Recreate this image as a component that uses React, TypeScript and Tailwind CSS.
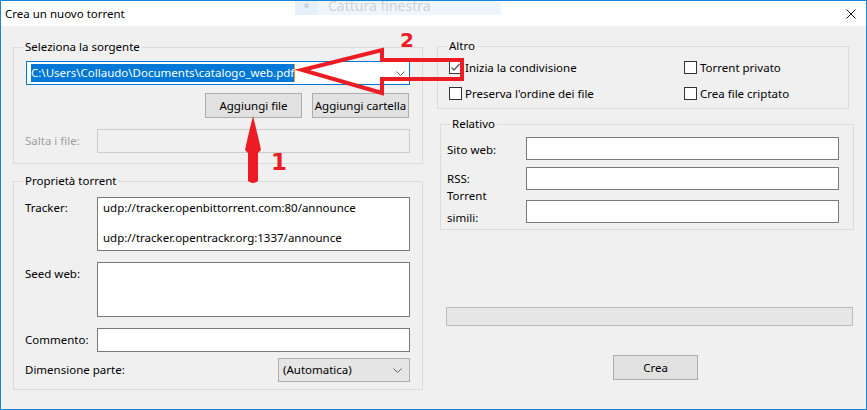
import React from "react";

function Group({
  title,
  className,
  children,
}: {
  title: string;
  className: string;
  children?: React.ReactNode;
}) {
  return (
    <div className={"relative border border-[#dcdcdc] " + className}>
      <span className="absolute left-[9px] top-[-9px] bg-[#f0f0f0] px-[2px] leading-[16px] whitespace-nowrap">
        {title}
      </span>
      {children}
    </div>
  );
}

function Chevron() {
  return (
    <svg width="9" height="5" viewBox="0 0 9 5" className="shrink-0">
      <polyline points="0.5,0.5 4.5,4.5 8.5,0.5" fill="none" stroke="#606060" strokeWidth="1" />
    </svg>
  );
}

function Check({ label, checked }: { label: string; checked?: boolean }) {
  return (
    <div className="flex items-center h-[13px]">
      <div className="w-[13px] h-[13px] border border-[#333333] bg-white flex items-center justify-center shrink-0">
        {checked && (
          <svg width="11" height="11" viewBox="0 0 11 11">
            <polyline points="1.5,5.5 4,8 9.5,2" fill="none" stroke="#5a5a5a" strokeWidth="1.3" />
          </svg>
        )}
      </div>
      <span className="ml-[3px] leading-[16px] whitespace-nowrap">{label}</span>
    </div>
  );
}

export default function App() {
  return (
    <div className="w-[867px] h-[410px] border border-[#1883d7] bg-[#f0f0f0] relative overflow-hidden text-[11.5px] leading-[16px] text-black font-['Noto_Sans','Liberation_Sans',sans-serif]">
      {/* title bar */}
      <div className="h-[25px] bg-white flex items-center justify-between pl-[4px] pr-[10px]">
        <span>Crea un nuovo torrent</span>
        <svg width="10" height="10" viewBox="0 0 10 10">
          <line x1="0.5" y1="0.5" x2="9.5" y2="9.5" stroke="#111" strokeWidth="1" />
          <line x1="9.5" y1="0.5" x2="0.5" y2="9.5" stroke="#111" strokeWidth="1" />
        </svg>
      </div>

      {/* body */}
      <div className="flex pl-[12px] pt-[20px]">
        {/* left column */}
        <div className="w-[410px] pt-[1px] flex flex-col">
          <Group title="Seleziona la sorgente" className="h-[117px] pl-[11px] pr-[12px] pt-[13px]">
            <div className="ml-[1px] h-[24px] border border-[#0078d7] bg-white flex items-center justify-between pl-[4px] pr-[4px]">
              <span className="leading-[18px] bg-[#0078d7] text-white border-r border-[#f39a1f] whitespace-nowrap">
                C:\Users\Collaudo\Documents\catalogo_web.pdf
              </span>
              <Chevron />
            </div>
            <div className="flex justify-end gap-[10px] mt-[8px] mr-[1px]">
              <button className="w-[97px] h-[25px] bg-[#e1e1e1] border border-[#adadad] leading-[16px] whitespace-nowrap">
                Aggiungi file
              </button>
              <button className="w-[97px] h-[25px] bg-[#e1e1e1] border border-[#adadad] leading-[16px] whitespace-nowrap">
                Aggiungi cartella
              </button>
            </div>
            <div className="flex items-center mt-[11px]">
              <span className="w-[72px] text-[#a0a0a0]">Salta i file:</span>
              <div className="flex-1 h-[24px] border border-[#cccccc] bg-[#f0f0f0]" />
            </div>
          </Group>

          <Group title="Proprietà torrent" className="mt-[17px] h-[209px] pl-[11px] pr-[12px] pt-[15px]">
            <div className="flex">
              <span className="w-[72px] pt-[3px]">Tracker:</span>
              <div className="flex-1 h-[54px] border border-[#7a7a7a] bg-white pl-[5px] pt-[2px] leading-[15px]">
                <div>udp://tracker.openbittorrent.com:80/announce</div>
                <div>&nbsp;</div>
                <div>udp://tracker.opentrackr.org:1337/announce</div>
              </div>
            </div>
            <div className="flex mt-[11px]">
              <span className="w-[72px] pt-[4px]">Seed web:</span>
              <div className="flex-1 h-[55px] border border-[#7a7a7a] bg-white" />
            </div>
            <div className="flex items-center mt-[11px]">
              <span className="w-[72px]">Commento:</span>
              <div className="flex-1 h-[24px] border border-[#7a7a7a] bg-white" />
            </div>
            <div className="flex items-center justify-between mt-[6px]">
              <span>Dimensione parte:</span>
              <div className="w-[132px] h-[24px] border border-[#adadad] bg-[#e5e5e5] flex items-center justify-between pl-[4px] pr-[7px]">
                <span>(Automatica)</span>
                <Chevron />
              </div>
            </div>
          </Group>
        </div>

        {/* right column */}
        <div className="ml-[14px] w-[416px] flex flex-col">
          <Group title="Altro" className="w-[412px] h-[63px] pl-[11px] pt-[14px]">
            <div className="grid grid-cols-[235px_1fr] gap-y-[13px]">
              <Check label="Inizia la condivisione" checked />
              <Check label="Torrent privato" />
              <Check label="Preserva l'ordine dei file" />
              <Check label="Crea file criptato" />
            </div>
          </Group>

          <Group title="Relativo" className="mt-[15px] ml-[3px] w-[414px] h-[106px] pl-[6px] pr-[14px] pt-[12px]">
            <div className="flex items-center">
              <span className="w-[79px] pt-[3px]">Sito web:</span>
              <div className="flex-1 h-[23px] border border-[#7a7a7a] bg-white" />
            </div>
            <div className="flex items-center mt-[7px]">
              <span className="w-[79px]">RSS:</span>
              <div className="flex-1 h-[23px] border border-[#7a7a7a] bg-white" />
            </div>
            <div className="flex items-start mt-[10px]">
              <span className="w-[79px] leading-[22px] -mt-[15px]">
                Torrent
                <br />
                simili:
              </span>
              <div className="flex-1 h-[23px] border border-[#7a7a7a] bg-white" />
            </div>
          </Group>

          <div className="mt-[77px] ml-[9px] w-[407px] h-[19px] border border-[#bcbcbc] bg-[#e6e6e6]" />

          <button className="mt-[29px] ml-[176px] w-[85px] h-[25px] bg-[#e1e1e1] border border-[#adadad] leading-[16px]">
            Crea
          </button>
        </div>
      </div>

      {/* screen-capture tool overlay */}
      <div className="absolute left-[294px] top-0 w-[206px] h-[14px] flex bg-[#eef6fd]">
        <div className="w-[22px] h-full bg-[#e5f0fb] flex justify-center">
          <div className="w-[5px] h-[5px] rounded-full bg-[#d4d4d4] mt-[2px]" />
        </div>
        <span className="ml-[11px] text-[14px] leading-[10px] text-[#d2d2d2] whitespace-nowrap">
          Cattura finestra
        </span>
      </div>

      {/* annotations */}
      <svg
        className="absolute left-[-1px] top-[-1px] pointer-events-none"
        width="867"
        height="410"
        viewBox="0 0 867 410"
      >
        <polygon
          points="302,70 382,50 382,60 462,60 462,79 382,79 382,93"
          fill="none"
          stroke="#ed1c24"
          strokeWidth="4"
          strokeLinejoin="miter"
        />
        <path
          d="M253,116 C256,128 259,140 261,150 L258,153 L258,181 Q253,185 248,181 L248,153 L245,150 C247,140 250,128 253,116 Z"
          fill="#ed1c24"
        />
        <text x="400" y="47" fill="#ed1c24" fontSize="20" fontWeight="bold" fontFamily="DejaVu Sans, sans-serif">
          2
        </text>
        <text x="271" y="170" fill="#ed1c24" fontSize="23" fontWeight="bold" fontFamily="DejaVu Sans, sans-serif">
          1
        </text>
      </svg>
    </div>
  );
}
